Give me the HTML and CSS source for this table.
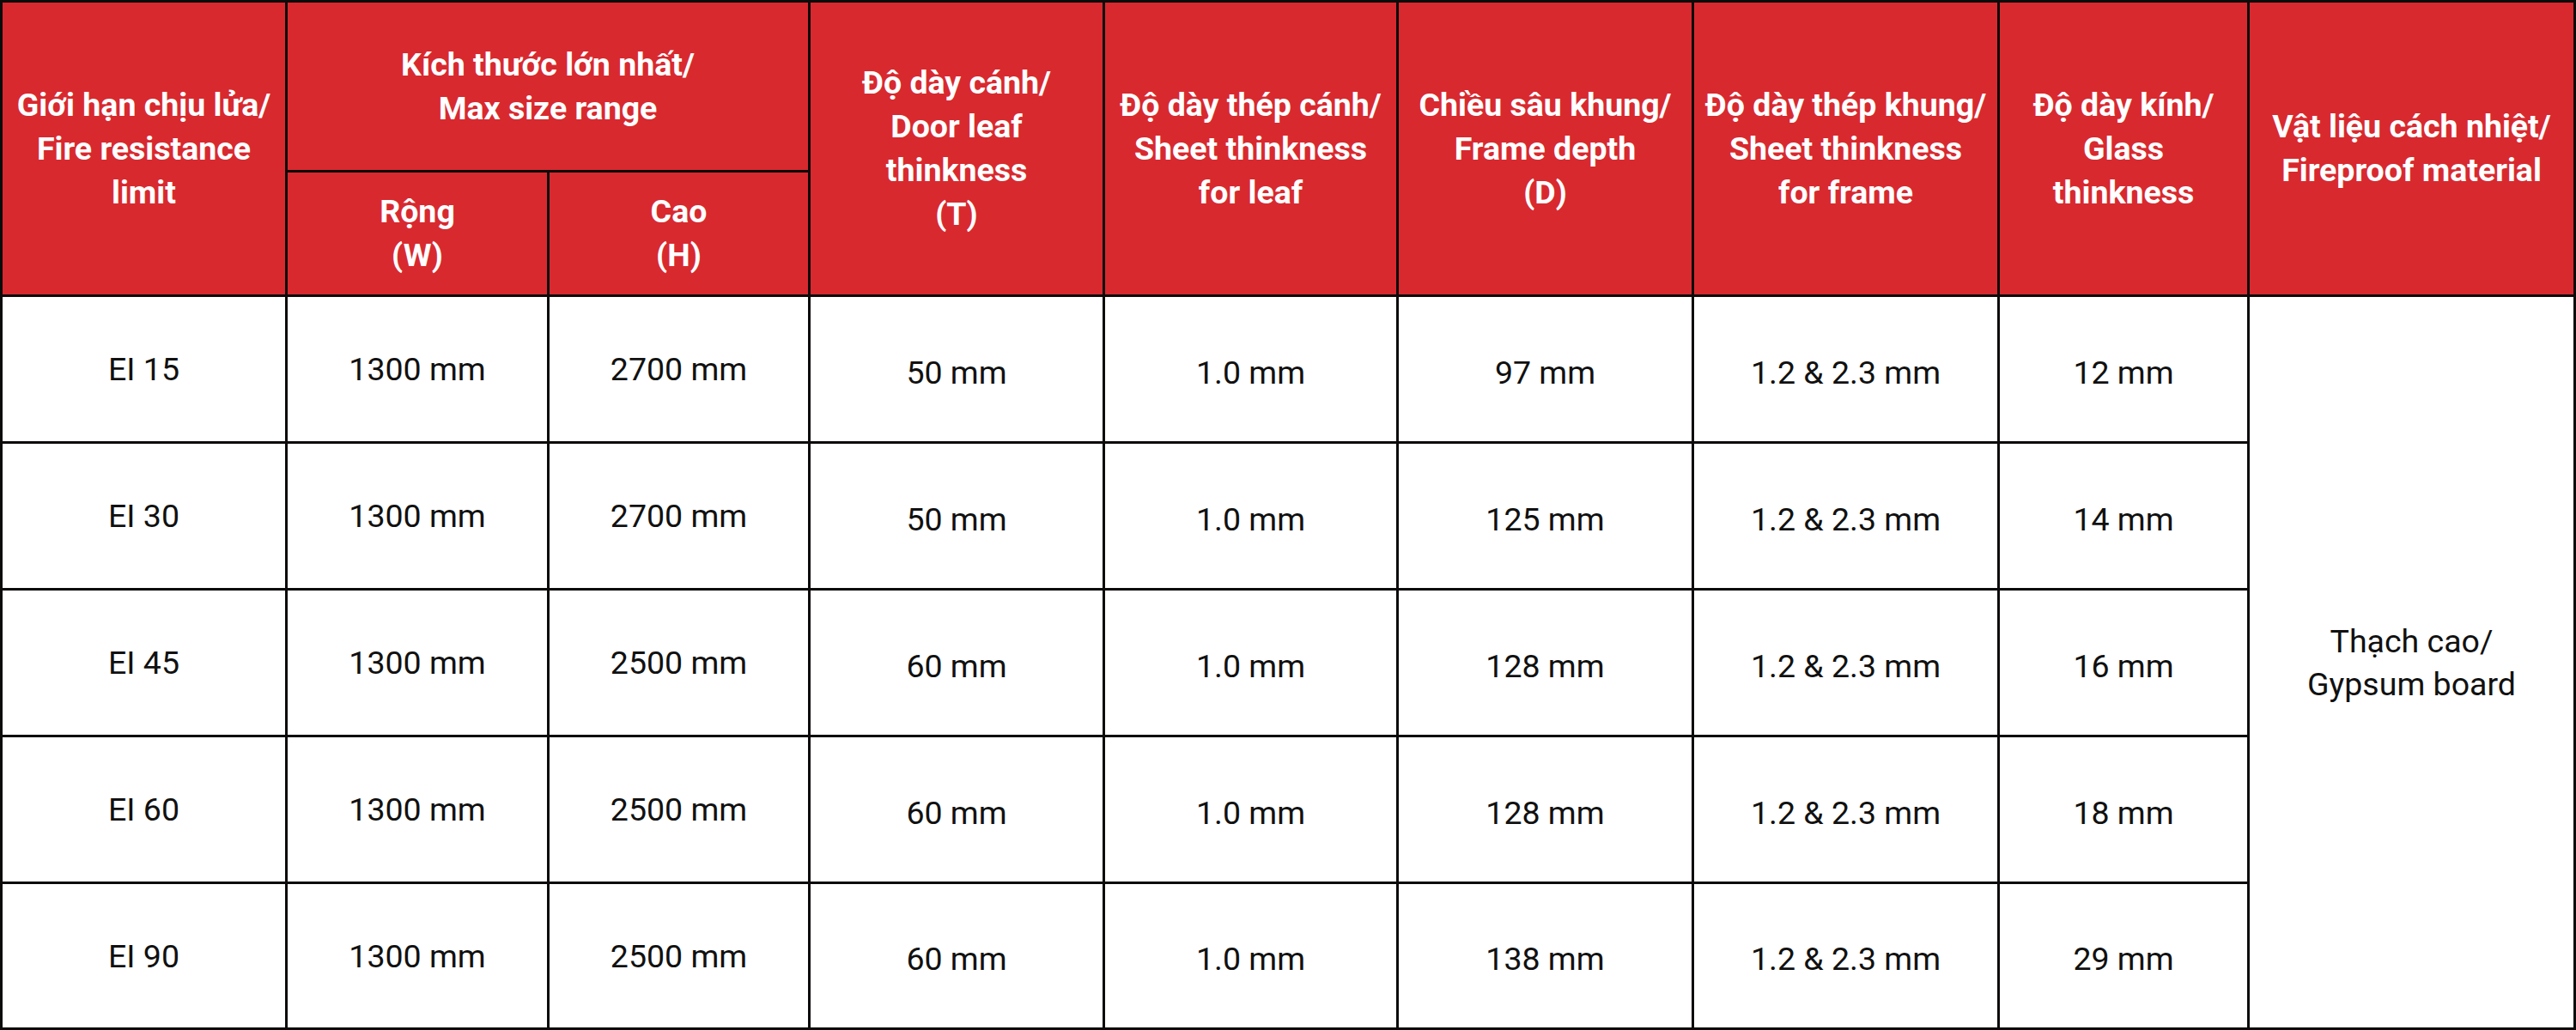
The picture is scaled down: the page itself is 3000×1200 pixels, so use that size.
FILE: index.html
```html
<!DOCTYPE html>
<html lang="vi">
<head>
<meta charset="utf-8">
<title>Bảng thông số cửa chống cháy</title>
<link rel="stylesheet" href="styles.css">
</head>
<body>
<div class="spec-table">
  <div class="cell head span-rows c1">Giới hạn chịu lửa/<br>Fire resistance<br>limit</div>
  <div class="cell head group">Kích thước lớn nhất/<br>Max size range</div>
  <div class="cell head span-rows c4">Độ dày cánh/<br>Door leaf<br>thinkness<br>(T)</div>
  <div class="cell head span-rows c5">Độ dày thép cánh/<br>Sheet thinkness<br>for leaf</div>
  <div class="cell head span-rows c6">Chiều sâu khung/<br>Frame depth<br>(D)</div>
  <div class="cell head span-rows c7">Độ dày thép khung/<br>Sheet thinkness<br>for frame</div>
  <div class="cell head span-rows c8">Độ dày kính/<br>Glass<br>thinkness</div>
  <div class="cell head span-rows c9">Vật liệu cách nhiệt/<br>Fireproof material</div>
  <div class="cell head sub c2">Rộng<br>(W)</div>
  <div class="cell head sub c3">Cao<br>(H)</div>

  <div class="cell">EI 15</div><div class="cell">1300 mm</div><div class="cell">2700 mm</div><div class="cell low">50 mm</div><div class="cell low">1.0 mm</div><div class="cell low">97 mm</div><div class="cell low">1.2 &amp; 2.3 mm</div><div class="cell low">12 mm</div>
  <div class="cell material">Thạch cao/<br>Gypsum board</div>
  <div class="cell">EI 30</div><div class="cell">1300 mm</div><div class="cell">2700 mm</div><div class="cell low">50 mm</div><div class="cell low">1.0 mm</div><div class="cell low">125 mm</div><div class="cell low">1.2 &amp; 2.3 mm</div><div class="cell low">14 mm</div>
  <div class="cell">EI 45</div><div class="cell">1300 mm</div><div class="cell">2500 mm</div><div class="cell low">60 mm</div><div class="cell low">1.0 mm</div><div class="cell low">128 mm</div><div class="cell low">1.2 &amp; 2.3 mm</div><div class="cell low">16 mm</div>
  <div class="cell">EI 60</div><div class="cell">1300 mm</div><div class="cell">2500 mm</div><div class="cell low">60 mm</div><div class="cell low">1.0 mm</div><div class="cell low">128 mm</div><div class="cell low">1.2 &amp; 2.3 mm</div><div class="cell low">18 mm</div>
  <div class="cell">EI 90</div><div class="cell">1300 mm</div><div class="cell">2500 mm</div><div class="cell low">60 mm</div><div class="cell low">1.0 mm</div><div class="cell low">138 mm</div><div class="cell low">1.2 &amp; 2.3 mm</div><div class="cell low">29 mm</div>
</div>
</body>
</html>
```
FILE: styles.css
```css
html, body {
  margin: 0;
  padding: 0;
  overflow: hidden;
  background: #ffffff;
}

.spec-table {
  box-sizing: border-box;
  width: 3000px;
  height: 1200px;
  padding: 3px;
  gap: 3px;
  background: #0d0a0a;
  display: grid;
  grid-template-columns: 329px 302px 301px 340px 339px 341px 353px 288px 377px;
  grid-template-rows: 195px 142px 168px 168px 168px 168px 167px;
  font-family: Roboto, "Noto Sans", "Liberation Sans", sans-serif;
}

.cell {
  box-sizing: border-box;
  display: flex;
  align-items: center;
  justify-content: center;
  text-align: center;
  background: #ffffff;
  color: #111111;
  font-size: 37.5px;
  line-height: 50px;
  font-weight: 400;
}

.low {
  padding-top: 7px;
}

.head {
  background: #d8292f;
  color: #ffffff;
  font-weight: 700;
  font-size: 37.5px;
  line-height: 51px;
}

.span-rows { grid-row: 1 / span 2; }
.c1 { grid-column: 1; }
.group { grid-column: 2 / span 2; grid-row: 1; }
.sub { grid-row: 2; }
.c2 { grid-column: 2; }
.c3 { grid-column: 3; }
.c4 { grid-column: 4; }
.c5 { grid-column: 5; }
.c6 { grid-column: 6; }
.c7 { grid-column: 7; }
.c8 { grid-column: 8; }
.c9 { grid-column: 9; }

.material {
  grid-column: 9;
  grid-row: 3 / span 5;
}
```
